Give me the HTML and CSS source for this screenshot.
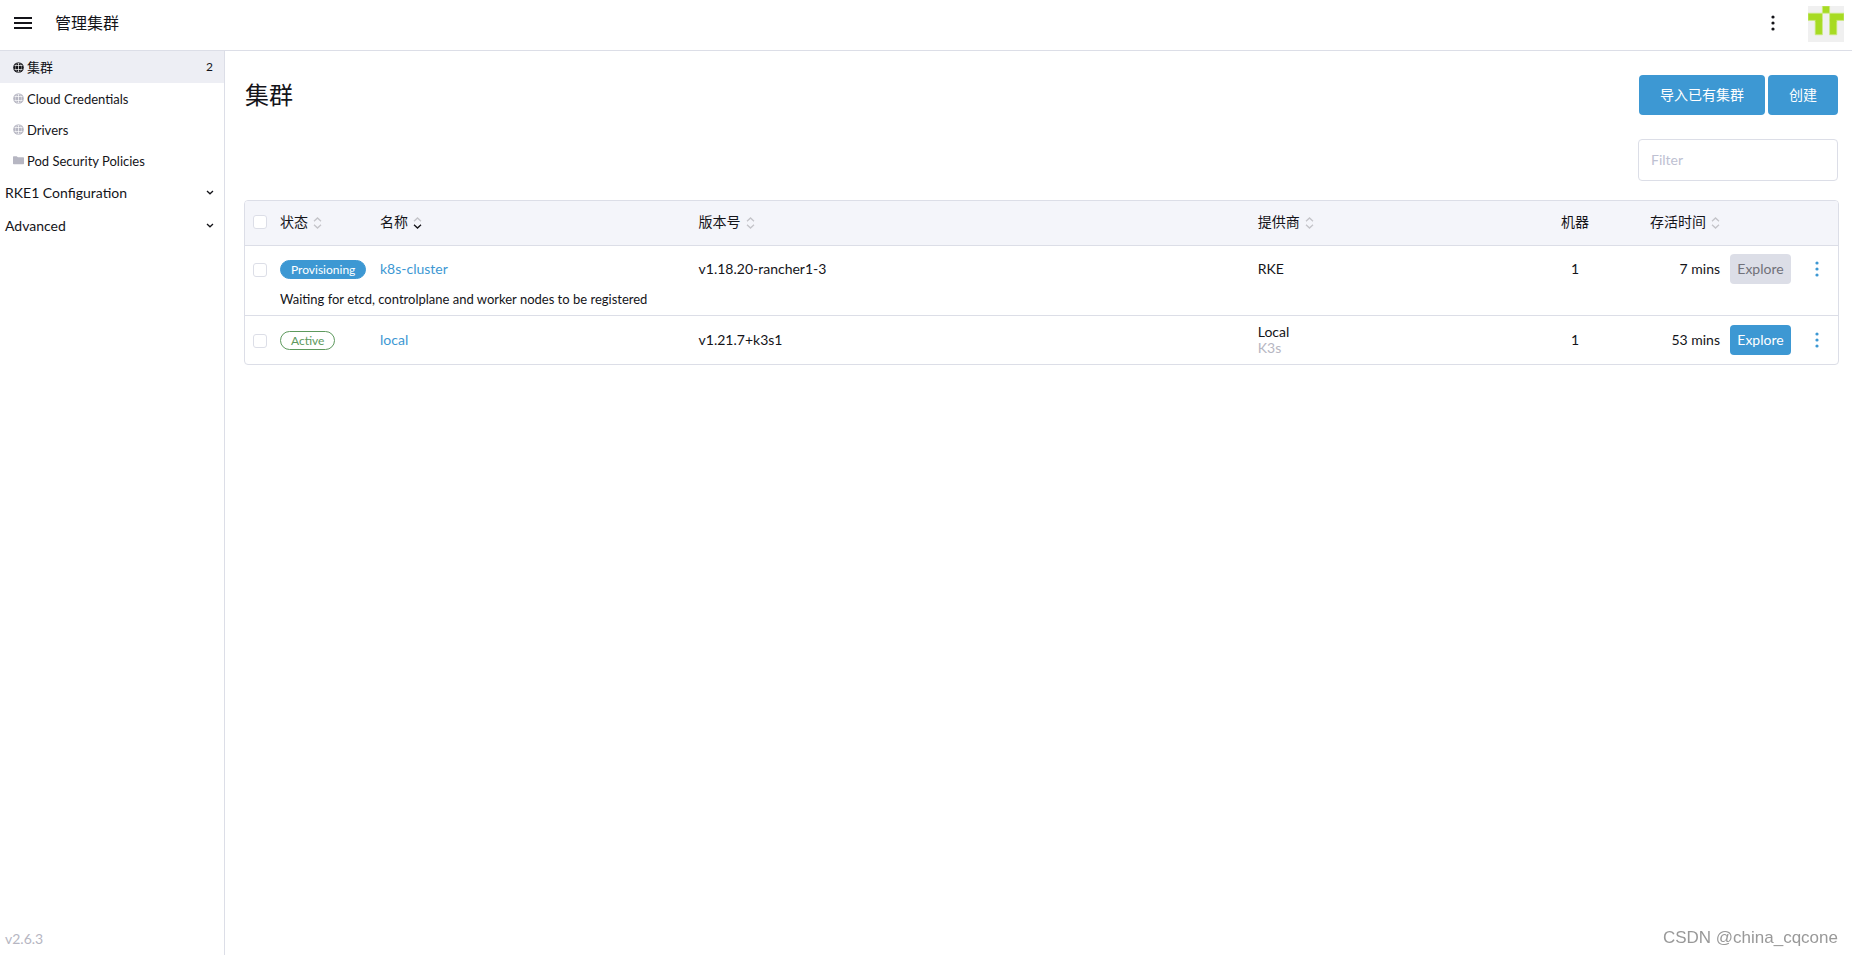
FILE: index.html
```html
<!DOCTYPE html>
<html lang="zh-CN">
<head>
<meta charset="utf-8">
<meta name="viewport" content="width=device-width, initial-scale=1">
<title>管理集群</title>
<link rel="stylesheet" href="styles.css">
</head>
<body>
<svg class="defs" aria-hidden="true">
  <symbol id="globe" viewBox="0 0 11 11">
    <circle cx="5.5" cy="5.5" r="5.3" fill="currentColor"/>
    <g class="globe-lines"><path d="M5.5 1v9M1.500 3.500h8M1.500 7.500h8"/><ellipse cx="5.5" cy="5.5" rx="3" ry="4.500"/></g>
  </symbol>
  <symbol id="folder" viewBox="0 0 11 11">
    <path d="M0 2q0-.7.7-.7h3l1.200 1h5.400q.7 0 .7.7v5.500q0 .7-.7.7H.7Q0 9.200 0 8.500z" fill="currentColor"/>
  </symbol>
  <symbol id="chevron" viewBox="0 0 8 5"><path d="M1 1l3 2.800 3-2.800" class="line"/></symbol>
  <symbol id="sort" viewBox="0 0 9 12">
    <path class="line up" d="M1 4.300l3.500-3.300L8 4.300"/>
    <path class="line down" d="M1 7.700l3.500 3.300L8 7.700"/>
  </symbol>
  <symbol id="dots" viewBox="0 0 4 16">
    <g fill="currentColor"><circle cx="2" cy="2" r="1.600"/><circle cx="2" cy="8" r="1.600"/><circle cx="2" cy="14" r="1.600"/></g>
  </symbol>
</svg>

<header class="topbar">
  <button class="icon-button menu" aria-label="Menu"><svg width="18" height="12" viewBox="0 0 18 12"><path d="M0 1h18M0 6h18M0 11h18" stroke="currentColor" stroke-width="2"/></svg></button>
  <div class="product">管理集群</div>
  <button class="icon-button more" aria-label="More"><svg width="4" height="16"><use href="#dots"/></svg></button>
  <button class="icon-button user" aria-label="User">
    <svg width="36" height="36" viewBox="0 0 5 5"><path fill="#f0f0f0" d="M0 0h5v5H0z"/><path fill="#a7db23" stroke="#cdea84" stroke-width=".1" d="M2 0h1v1H2zM0 1h2v1H0zM3 1h2v1H3zM1 2h1v2H1zM3 2h1v2H3z"/><path fill="#a7db23" d="M1.050 1.800h.9v.4h-.9zM3.050 1.800h.9v.4h-.9z"/></svg>
  </button>
</header>

<div class="layout">
  <nav class="sidebar">
    <ul class="links">
      <li><a class="link active" href="#"><svg width="11" height="11"><use href="#globe"/></svg><span>集群</span><span class="count">2</span></a></li>
      <li><a class="link" href="#"><svg width="11" height="11"><use href="#globe"/></svg><span>Cloud Credentials</span></a></li>
      <li><a class="link" href="#"><svg width="11" height="11"><use href="#globe"/></svg><span>Drivers</span></a></li>
      <li><a class="link" href="#"><svg width="11" height="11"><use href="#folder"/></svg><span>Pod Security Policies</span></a></li>
    </ul>
    <button class="group">RKE1 Configuration<svg width="8" height="5"><use href="#chevron"/></svg></button>
    <button class="group">Advanced<svg width="8" height="5"><use href="#chevron"/></svg></button>
    <div class="version">v2.6.3</div>
  </nav>

  <main class="content">
    <div class="heading">
      <h1>集群</h1>
      <div class="actions">
        <button class="primary">导入已有集群</button>
        <button class="primary">创建</button>
      </div>
    </div>
    <div class="search"><input type="search" placeholder="Filter" aria-label="Filter"></div>

    <div class="table-frame">
      <table>
        <colgroup><col class="c-check"><col class="c-state"><col class="c-name"><col class="c-version"><col><col class="c-machines"><col class="c-age"><col class="c-explore"><col class="c-menu"></colgroup>
        <thead>
          <tr>
            <th><input type="checkbox" aria-label="Select all"></th>
            <th>状态<svg class="sort" width="9" height="12"><use href="#sort"/></svg></th>
            <th>名称<svg class="sort sorted" width="9" height="12" viewBox="0 0 9 12"><path class="line up" d="M1 4.300l3.500-3.300L8 4.300"/><path class="line down" d="M1 7.700l3.500 3.300L8 7.700"/></svg></th>
            <th>版本号<svg class="sort" width="9" height="12"><use href="#sort"/></svg></th>
            <th>提供商<svg class="sort" width="9" height="12"><use href="#sort"/></svg></th>
            <th class="center">机器</th>
            <th class="right">存活时间<svg class="sort" width="9" height="12"><use href="#sort"/></svg></th>
            <th></th>
            <th></th>
          </tr>
        </thead>
        <tbody>
          <tr class="main-row">
            <td><input type="checkbox" aria-label="Select k8s-cluster"></td>
            <td><span class="badge provisioning">Provisioning</span></td>
            <td><a href="#">k8s-cluster</a></td>
            <td>v1.18.20-rancher1-3</td>
            <td>RKE</td>
            <td class="center">1</td>
            <td class="right">7 mins</td>
            <td><button class="explore" disabled>Explore</button></td>
            <td class="center"><button class="icon-button row-menu" aria-label="Actions"><svg width="4" height="16"><use href="#dots"/></svg></button></td>
          </tr>
          <tr class="sub-row">
            <td></td>
            <td colspan="8">Waiting for etcd, controlplane and worker nodes to be registered</td>
          </tr>
        </tbody>
        <tbody>
          <tr class="main-row">
            <td><input type="checkbox" aria-label="Select local"></td>
            <td><span class="badge ready">Active</span></td>
            <td><a href="#">local</a></td>
            <td>v1.21.7+k3s1</td>
            <td class="provider">Local<div class="muted">K3s</div></td>
            <td class="center">1</td>
            <td class="right">53 mins</td>
            <td><button class="explore">Explore</button></td>
            <td class="center"><button class="icon-button row-menu" aria-label="Actions"><svg width="4" height="16"><use href="#dots"/></svg></button></td>
          </tr>
        </tbody>
      </table>
    </div>
  </main>
</div>
<div class="watermark">CSDN @china_cqcone</div>
</body>
</html>
```
FILE: styles.css
```css
:root {
  --text: #141419;
  --border: #dcdee7;
  --muted: #b6b6c2;
  --primary: #3d98d3;
  --font: Lato, "Noto Sans CJK SC", sans-serif;
}
* { box-sizing: border-box; }
body {
  margin: 0;
  min-height: 100vh;
  display: flex;
  flex-direction: column;
  background: #fff;
  color: var(--text);
  font: 14px/20px var(--font);
}
.defs { position: absolute; width: 0; height: 0; }
svg { display: block; flex: none; }
a { color: var(--primary); text-decoration: none; }
button, input { font: inherit; margin: 0; }
button { border: 0; padding: 0; background: none; color: inherit; cursor: pointer; }
.line { fill: none; stroke: currentColor; stroke-width: 1.3; }
.icon-button { display: inline-flex; align-items: center; justify-content: center; }

.topbar {
  display: flex;
  align-items: center;
  height: 51px;
  padding: 0 8px 4px 14px;
  border-bottom: 1px solid var(--border);
}
.product { margin-left: 23px; font-size: 16px; }
.more { margin-left: auto; margin-right: 33px; }
.user { margin-top: 2px; }

.layout { flex: 1; display: flex; }
.sidebar {
  flex: none;
  width: 225px;
  display: flex;
  flex-direction: column;
  border-right: 1px solid var(--border);
}
.links { list-style: none; margin: 0; padding: 0; }
.link {
  display: flex;
  align-items: center;
  gap: 3px;
  height: 31px;
  padding: 0 11px 0 13px;
  color: var(--text);
  font-size: 13px;
}
.link svg { color: var(--muted); }
.globe-lines { fill: none; stroke: #fff; stroke-width: .7; }
.globe-lines ellipse { stroke-width: .4; }
.link.active { height: 32px; background: #edeef4; }
.link.active svg { color: var(--text); }
.count { margin-left: auto; font-size: 12px; }
.group {
  display: flex;
  align-items: center;
  justify-content: space-between;
  height: 33px;
  padding: 0 10px 0 5px;
}
.version { margin-top: auto; padding: 0 5px 6px; color: var(--muted); }

.content { flex: 1; min-width: 0; padding: 24px 13px 24px 19px; }
.heading { display: flex; align-items: center; justify-content: space-between; padding: 0 1px; }
h1 { margin: 0; font-size: 24px; line-height: 32px; font-weight: 400; }
.actions { display: flex; gap: 3px; }
.primary {
  height: 40px;
  padding: 0 21px;
  border-radius: 4px;
  background: var(--primary);
  color: #fff;
}
.search { display: flex; justify-content: flex-end; margin: 24px 1px 19px; }
.search input {
  width: 200px;
  height: 42px;
  padding: 0 12px 2px;
  border: 1px solid var(--border);
  border-radius: 4px;
  background: #fff;
  appearance: none;
}
.search input::placeholder { color: #bec1d2; }

.table-frame { border: 1px solid var(--border); border-radius: 4px; overflow: hidden; }
table { width: 100%; table-layout: fixed; border-collapse: separate; border-spacing: 0; }
.c-check { width: 30px; }
.c-state { width: 100px; }
.c-name { width: 20%; }
.c-version { width: 35.1%; }
.c-machines { width: 82px; }
.c-age { width: 109px; }
.c-explore { width: 71px; }
.c-menu { width: 42px; }
th, td { padding: 0 5px; text-align: left; font-weight: 400; }
th { height: 45px; padding-bottom: 2px; background: #f4f5fa; border-bottom: 1px solid var(--border); }
th:first-child, td:first-child { padding-left: 8px; }
.main-row td:first-child { padding-top: 2px; }
.center { text-align: center; }
.right { text-align: right; }
.sort { display: inline-block; vertical-align: -2px; margin-left: 5px; color: #c4c4c9; }
.sorted .down { color: var(--text); }
.main-row { height: 45px; }
.sub-row td { padding-bottom: 8px; font-size: 13px; line-height: 16px; }
tbody + tbody td { height: 49px; border-top: 1px solid var(--border); }
input[type="checkbox"] {
  display: block;
  appearance: none;
  width: 14px;
  height: 14px;
  border: 1px solid var(--border);
  border-radius: 3px;
  background: #fff;
}
.badge {
  display: inline-block;
  padding: 0 10px;
  border: 1px solid;
  border-radius: 20px;
  font-size: 12px;
  line-height: 17px;
  vertical-align: middle;
}
.provisioning { border-color: var(--primary); background: var(--primary); color: #fff; }
.ready { color: #5d995d; }
.provider { line-height: 16px; }
.muted { color: var(--muted); }
.explore {
  display: block;
  width: 100%;
  height: 30px;
  border-radius: 4px;
  background: var(--primary);
  color: #fff;
}
.explore:disabled { background: var(--border); color: #717179; }
.row-menu { padding-bottom: 2px; color: var(--primary); vertical-align: middle; }

.watermark {
  position: fixed;
  right: 14px;
  bottom: 7px;
  color: #999;
  font: 17px/20px "Liberation Sans", sans-serif;
}
```
